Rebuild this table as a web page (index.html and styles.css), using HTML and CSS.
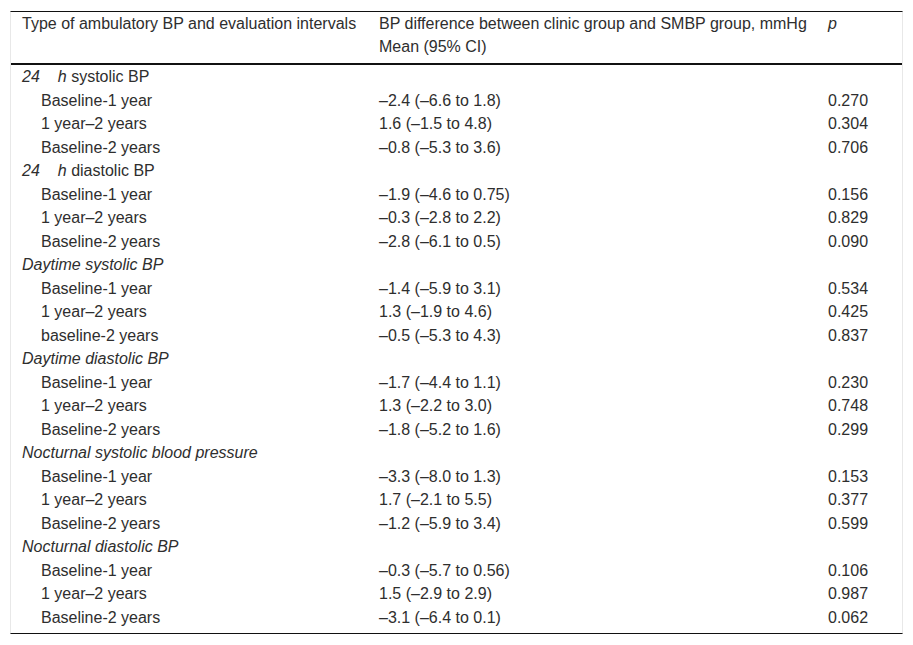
FILE: index.html
```html
<!DOCTYPE html>
<html>
<head>
<meta charset="utf-8">
<link rel="stylesheet" href="styles.css">
</head>
<body>
<div class="wrap">
<table class="tbl">
<colgroup><col class="c1"><col class="c2"><col class="c3"></colgroup>
<thead>
<tr><th>Type of ambulatory BP and evaluation intervals</th><th>BP difference between clinic group and SMBP group, mmHg<br>Mean (95% CI)</th><th><i>p</i></th></tr>
</thead>
<tbody>
<tr class="grp"><td><i>24</i><span class="gap"></span><i>h</i> systolic BP</td><td></td><td></td></tr>
<tr><td class="ind">Baseline-1 year</td><td>&ndash;2.4 (&ndash;6.6 to 1.8)</td><td>0.270</td></tr>
<tr><td class="ind">1 year&ndash;2 years</td><td>1.6 (&ndash;1.5 to 4.8)</td><td>0.304</td></tr>
<tr><td class="ind">Baseline-2 years</td><td>&ndash;0.8 (&ndash;5.3 to 3.6)</td><td>0.706</td></tr>
<tr class="grp"><td><i>24</i><span class="gap"></span><i>h</i> diastolic BP</td><td></td><td></td></tr>
<tr><td class="ind">Baseline-1 year</td><td>&ndash;1.9 (&ndash;4.6 to 0.75)</td><td>0.156</td></tr>
<tr><td class="ind">1 year&ndash;2 years</td><td>&ndash;0.3 (&ndash;2.8 to 2.2)</td><td>0.829</td></tr>
<tr><td class="ind">Baseline-2 years</td><td>&ndash;2.8 (&ndash;6.1 to 0.5)</td><td>0.090</td></tr>
<tr class="grp"><td><i>Daytime systolic BP</i></td><td></td><td></td></tr>
<tr><td class="ind">Baseline-1 year</td><td>&ndash;1.4 (&ndash;5.9 to 3.1)</td><td>0.534</td></tr>
<tr><td class="ind">1 year&ndash;2 years</td><td>1.3 (&ndash;1.9 to 4.6)</td><td>0.425</td></tr>
<tr><td class="ind">baseline-2 years</td><td>&ndash;0.5 (&ndash;5.3 to 4.3)</td><td>0.837</td></tr>
<tr class="grp"><td><i>Daytime diastolic BP</i></td><td></td><td></td></tr>
<tr><td class="ind">Baseline-1 year</td><td>&ndash;1.7 (&ndash;4.4 to 1.1)</td><td>0.230</td></tr>
<tr><td class="ind">1 year&ndash;2 years</td><td>1.3 (&ndash;2.2 to 3.0)</td><td>0.748</td></tr>
<tr><td class="ind">Baseline-2 years</td><td>&ndash;1.8 (&ndash;5.2 to 1.6)</td><td>0.299</td></tr>
<tr class="grp"><td><i>Nocturnal systolic blood pressure</i></td><td></td><td></td></tr>
<tr><td class="ind">Baseline-1 year</td><td>&ndash;3.3 (&ndash;8.0 to 1.3)</td><td>0.153</td></tr>
<tr><td class="ind">1 year&ndash;2 years</td><td>1.7 (&ndash;2.1 to 5.5)</td><td>0.377</td></tr>
<tr><td class="ind">Baseline-2 years</td><td>&ndash;1.2 (&ndash;5.9 to 3.4)</td><td>0.599</td></tr>
<tr class="grp"><td><i>Nocturnal diastolic BP</i></td><td></td><td></td></tr>
<tr><td class="ind">Baseline-1 year</td><td>&ndash;0.3 (&ndash;5.7 to 0.56)</td><td>0.106</td></tr>
<tr><td class="ind">1 year&ndash;2 years</td><td>1.5 (&ndash;2.9 to 2.9)</td><td>0.987</td></tr>
<tr><td class="ind">Baseline-2 years</td><td>&ndash;3.1 (&ndash;6.4 to 0.1)</td><td>0.062</td></tr>
</tbody>
</table>
</div>
</body>
</html>
```
FILE: styles.css
```css
html, body { margin: 0; padding: 0; background: #fff; }
body { padding: 11px 10px 0 10px; font-family: "Liberation Sans", Arial, sans-serif; font-size: 16px; color: #2e2e2e; }
.wrap {
  width: 891px;
  border-left: 1px solid #e8e8e8;
  border-right: 1px solid #e8e8e8;
  border-top: 1px solid #111;
  border-bottom: 1px solid #111;
  padding-bottom: 4px;
}
.tbl { width: 100%; border-collapse: collapse; table-layout: fixed; }
.c1 { width: 357px; }
.c2 { width: 449px; }
.c3 { width: 85px; }
.tbl th {
  font-weight: normal;
  text-align: left;
  vertical-align: top;
  line-height: 23px;
  padding: 0 11px 5px 11px;
  white-space: nowrap;
  border-bottom: 2px solid #111;
}
.tbl td {
  line-height: 23.5px;
  padding: 0 11px;
  white-space: nowrap;
  vertical-align: middle;
}
.tbl td.ind { padding-left: 30px; }
.gap { display: inline-block; width: 18px; }
```
